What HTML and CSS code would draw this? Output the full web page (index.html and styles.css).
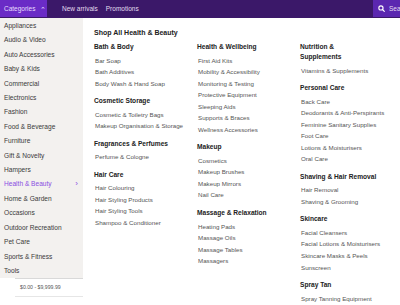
FILE: index.html
```html
<!DOCTYPE html>
<html lang="en">
<head>
  <meta charset="UTF-8" />
  <title>Categories</title>
  <link rel="stylesheet" href="styles.css">
</head>
<body>

<!-- top bar -->
<div class="topbar">
  <div class="cat-btn">Categories <span class="caret">&#8963;</span></div>
  <a href="#" class="nav-link">New arrivals</a>
  <a href="#" class="nav-link">Promotions</a>
  <div class="spacer"></div>
  <div class="search-btn">
    <svg width="7" height="7" viewBox="0 0 10 10"><circle cx="4.2" cy="4.2" r="3" fill="none" stroke="#fff" stroke-width="1.6"/><line x1="6.4" y1="6.4" x2="9" y2="9" stroke="#fff" stroke-width="1.7" stroke-linecap="round"/></svg>
    <span>Search</span>
  </div>
</div>

<div class="menu">
  <!-- left category list -->
  <div class="side">
    <ul class="cat-list">
      <li>Appliances</li>
      <li>Audio &amp; Video</li>
      <li>Auto Accessories</li>
      <li>Baby &amp; Kids</li>
      <li>Commercial</li>
      <li>Electronics</li>
      <li>Fashion</li>
      <li>Food &amp; Beverage</li>
      <li>Furniture</li>
      <li>Gift &amp; Novelty</li>
      <li>Hampers</li>
      <li class="active">Health &amp; Beauty <span class="chev">&#8250;</span></li>
      <li>Home &amp; Garden</li>
      <li>Occasions</li>
      <li>Outdoor Recreation</li>
      <li>Pet Care</li>
      <li>Sports &amp; Fitness</li>
      <li>Tools</li>
    </ul>
    <div class="price-row">$0.00 - $9,999.99</div>
  </div>

  <!-- sub categories -->
  <div class="panel">
    <div class="shop-all">Shop All Health &amp; Beauty</div>
    <div class="cols">
      <div class="col">
        <div class="group">
          <h4>Bath &amp; Body</h4>
          <ul><li>Bar Soap</li><li>Bath Additives</li><li>Body Wash &amp; Hand Soap</li></ul>
        </div>
        <div class="group">
          <h4>Cosmetic Storage</h4>
          <ul><li>Cosmetic &amp; Toiletry Bags</li><li>Makeup Organisation &amp; Storage</li></ul>
        </div>
        <div class="group">
          <h4>Fragrances &amp; Perfumes</h4>
          <ul><li>Perfume &amp; Cologne</li></ul>
        </div>
        <div class="group">
          <h4>Hair Care</h4>
          <ul><li>Hair Colouring</li><li>Hair Styling Products</li><li>Hair Styling Tools</li><li>Shampoo &amp; Conditioner</li></ul>
        </div>
      </div>
      <div class="col">
        <div class="group">
          <h4>Health &amp; Wellbeing</h4>
          <ul><li>First Aid Kits</li><li>Mobility &amp; Accessibility</li><li>Monitoring &amp; Testing</li><li>Protective Equipment</li><li>Sleeping Aids</li><li>Supports &amp; Braces</li><li>Wellness Accessories</li></ul>
        </div>
        <div class="group">
          <h4>Makeup</h4>
          <ul><li>Cosmetics</li><li>Makeup Brushes</li><li>Makeup Mirrors</li><li>Nail Care</li></ul>
        </div>
        <div class="group">
          <h4>Massage &amp; Relaxation</h4>
          <ul><li>Heating Pads</li><li>Massage Oils</li><li>Massage Tables</li><li>Massagers</li></ul>
        </div>
      </div>
      <div class="col">
        <div class="group">
          <h4>Nutrition &amp; Supplements</h4>
          <ul><li>Vitamins &amp; Supplements</li></ul>
        </div>
        <div class="group">
          <h4>Personal Care</h4>
          <ul><li>Back Care</li><li>Deodorants &amp; Anti-Perspirants</li><li>Feminine Sanitary Supplies</li><li>Foot Care</li><li>Lotions &amp; Moisturisers</li><li>Oral Care</li></ul>
        </div>
        <div class="group">
          <h4>Shaving &amp; Hair Removal</h4>
          <ul><li>Hair Removal</li><li>Shaving &amp; Grooming</li></ul>
        </div>
        <div class="group">
          <h4>Skincare</h4>
          <ul><li>Facial Cleansers</li><li>Facial Lotions &amp; Moisturisers</li><li>Skincare Masks &amp; Peels</li><li>Sunscreen</li></ul>
        </div>
        <div class="group">
          <h4>Spray Tan</h4>
          <ul><li>Spray Tanning Equipment</li></ul>
        </div>
      </div>
    </div>
  </div>
</div>

</body>
</html>
```

FILE: styles.css
```css
html, body {
  margin: 0;
  overflow: hidden;
}
body {
  font-family: "Liberation Sans", Arial, sans-serif;
  background: #fff;
  width: 400px;
}
ul {
  list-style: none;
  margin: 0;
  padding: 0;
}

/* top bar */
.topbar {
  display: flex;
  align-items: stretch;
  height: 18px;
  width: 432px;
  background: #3b1869;
  font-size: 6.5px;
}
.cat-btn {
  width: 47px;
  box-sizing: border-box;
  padding: 0 0 0 4px;
  height: 17px;
  background: #6a2bc6;
  color: #e8dcff;
  display: flex;
  align-items: center;
}
.cat-btn .caret {
  margin-left: 5px;
  font-size: 7px;
  position: relative;
  top: 1px;
}
.nav-link {
  color: #e4dcf0;
  text-decoration: none;
  display: flex;
  align-items: center;
  margin-left: 15px;
  height: 17px;
}
.nav-link + .nav-link {
  margin-left: 8px;
}
.spacer {
  flex: 1;
}
.search-btn {
  width: 59px;
  height: 17px;
  box-sizing: border-box;
  padding-left: 5px;
  background: #5b27b0;
  color: #e4dcf0;
  display: flex;
  align-items: center;
  gap: 4px;
}

/* menu */
.menu {
  display: flex;
  align-items: flex-start;
}
.side {
  width: 83px;
  flex-shrink: 0;
}
.cat-list {
  background: #f3f1ef;
  padding: 1px 0 0 4px;
  height: 259px;
  font-size: 6.6px;
  color: #3a3a3a;
}
.cat-list li {
  line-height: 14.4px;
  display: flex;
  align-items: center;
  justify-content: space-between;
  padding-right: 5px;
}
.cat-list .active {
  color: #8a4ee2;
}
.chev {
  font-size: 8px;
}
.price-row {
  margin-left: 15px;
  border-top: 1px solid #d9d9d9;
  border-bottom: 1px solid #e6e6e6;
  height: 17px;
  line-height: 16px;
  padding-left: 5px;
  font-size: 5.2px;
  color: #555;
}

.panel {
  flex: 1;
  padding: 10px 0 0 11px;
  color: #555;
}
.shop-all {
  font-size: 7px;
  font-weight: bold;
  color: #222;
  line-height: 10px;
  margin-bottom: 4px;
}
.cols {
  display: grid;
  grid-template-columns: repeat(3, 74px);
  column-gap: 29px;
}
.group {
  margin-bottom: 7px;
}
.group h4 {
  margin: 0 0 2.5px;
  font-size: 6.6px;
  line-height: 10px;
  color: #222;
  white-space: nowrap;
}
.col:last-child .group:first-child h4 {
  white-space: normal;
}
.group li {
  font-size: 6.2px;
  line-height: 11.55px;
  padding-left: 1px;
  white-space: nowrap;
}
```
